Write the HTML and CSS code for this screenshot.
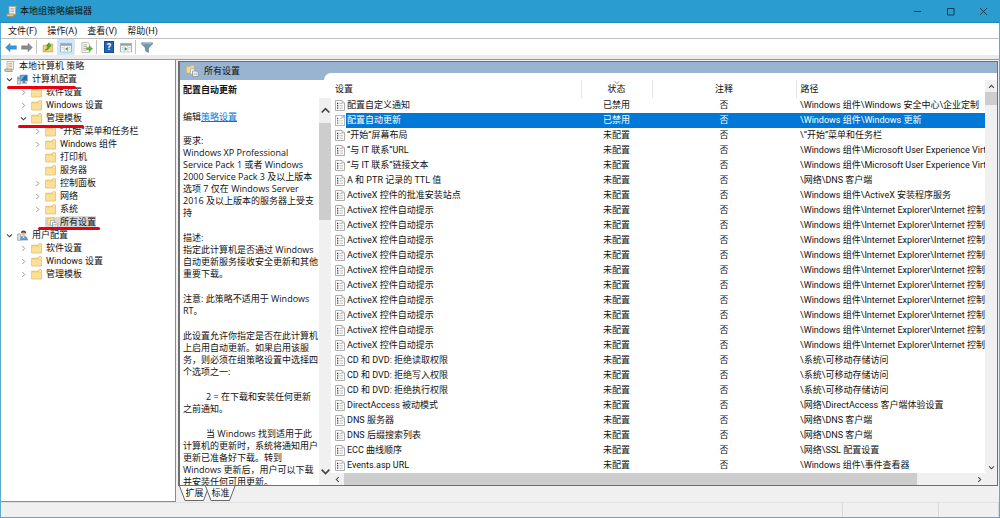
FILE: index.html
```html
<!DOCTYPE html>
<html lang="zh-CN">
<head>
<meta charset="utf-8">
<title>本地组策略编辑器</title>
<link rel="stylesheet" href="styles.css">
</head>
<body>
<svg class="defs" aria-hidden="true">
  <symbol id="scroll" viewBox="0 0 11 11"><path d="M3 .5h7.500q-1 .5-1 1.500V8.500H3z" fill="#f4ecd9" stroke="#b3a48b" stroke-width=".7"/><path d="M.5 9Q.5 8 1.500 8H8q-.6 1.500.4 2.500H2Q.5 10.500.5 9z" fill="#d9c9ab" stroke="#97866b" stroke-width=".7"/><path d="M4.500 2.500h3.500M4.500 4h3.500M4.500 5.500h3.500" stroke="#a4a4b4" stroke-width=".7"/></symbol>
  <symbol id="folder" viewBox="0 0 11 11"><path d="M.7 2.200h6.300l.8-1.400h2.600v9.200H.7z" fill="#f2cf75" stroke="#dcb558" stroke-width=".7"/><path d="M1 3.500h9v6H1z" fill="#fbe09a"/><path d="M8 1.500h2v1.300H8z" fill="#fff5cf"/></symbol>
  <symbol id="computer" viewBox="0 0 11 11"><path d="M3 1h7.500v6H3z" fill="#1d6fc0" stroke="#9aaabb" stroke-width=".8"/><path d="M3.500 1.500h4L4.500 6h-1z" fill="#64b3ec"/><path d="M6 7h2v1.500H6zM4.500 9h5.500" fill="#7c8792" stroke="#7c8792"/><path d="M.4 3h3v7h-3z" fill="#d5dde5" stroke="#758697" stroke-width=".7"/><path d="M1 4.500h1.700M1 6h1.700" stroke="#50657b" stroke-width=".7"/></symbol>
  <symbol id="user" viewBox="0 0 11 11"><path d="M3 10q-.2-4 3.500-4t4 4z" fill="#6aa4d2" stroke="#3f79ab" stroke-width=".6"/><circle cx="6.500" cy="3.500" r="2.200" fill="#e4ba91"/><path d="M4 3Q4 .6 6.700.6T9 3.500Q7.500 2 4 3z" fill="#66452c"/><path d="M.6 4h3v6.300h-3z" fill="#dce3e9" stroke="#7d8c99" stroke-width=".6"/><path d="M5.500 6.300l1 2 1-2z" fill="#fff"/></symbol>
  <symbol id="allset" viewBox="0 0 12 11"><path d="M.6 1.500h3.600l.7-1h2.500v6.800H.6z" fill="#f8dc91" stroke="#dfb75b" stroke-width=".7"/><path d="M4 3.500h4v5H4z" fill="#fff" stroke="#98a0a8" stroke-width=".7"/><path d="M6 5.500h3.700l1.500 1.500v3.500H6z" fill="#fff" stroke="#808890" stroke-width=".7"/><path d="M7 7.500h1M8.700 7.500h1.300M7 9h1M8.700 9h1.300" stroke="#6b7d90" stroke-width=".7"/></symbol>
  <symbol id="policy" viewBox="0 0 10 11"><path d="M.5.5h6.500l2.500 2.500v7.500h-9z" fill="#fff" stroke="#999" stroke-width=".8"/><path d="M7 .5V3h2.500" fill="#ddd" stroke="#999" stroke-width=".6"/><path d="M2 3.500h1.300M2 5.800h1.300M2 8.200h1.300" stroke="#333" stroke-width="1.300"/><path d="M4.500 3.500h2.500M4.500 5.800h3.500M4.500 8.200h3.500" stroke="#aaa" stroke-width=".8"/></symbol>
  <symbol id="right" viewBox="0 0 7 7"><path d="M2.300 1l2.500 2.500-2.500 2.500" fill="none" stroke="#9a9a9a"/></symbol>
  <symbol id="down" viewBox="0 0 7 7"><path d="M1 2.300l2.500 2.500L6 2.300" fill="none" stroke="#404040" stroke-width="1.100"/></symbol>
  <symbol id="arrow" viewBox="0 0 13 11"><path d="M.6 5.500L5.500.8v2.700h6.900v4H5.500v2.700z" fill="currentColor" stroke="#00000055" stroke-width=".6"/></symbol>
  <symbol id="upfolder" viewBox="0 0 12 12"><path d="M.7 3.500h4l1-1.200h5.500v8.500H.7z" fill="#f3cf72" stroke="#c39b43" stroke-width=".7"/><path d="M2.500 9Q5.500 8 6 4.500H4.300L7 .8l2.500 3.700H8Q7.500 8.500 2.500 9z" fill="#52ac38" stroke="#2f7f21" stroke-width=".5"/></symbol>
  <symbol id="console" viewBox="0 0 13 11"><path d="M.5 1h12v9.500H.5z" fill="#fff" stroke="#8b97a2" stroke-width=".8"/><path d="M1 1.500h11v2H1z" fill="#92a1ae"/><path d="M4.500 4v6M8.500 4v6" stroke="#a5b0ba" stroke-width=".7"/><path d="M1.700 5.500h1.800M1.700 7.200h1.800M9.500 5.500h2M9.500 7.200h2" stroke="#9cabba" stroke-width=".7"/></symbol>
  <symbol id="export" viewBox="0 0 13 12"><path d="M1 .5h6.500l2 2v9H1z" fill="#fffbe7" stroke="#9e9e8b" stroke-width=".7"/><path d="M2.500 3h4M2.500 5h4M2.500 7h3M2.500 9h3" stroke="#888" stroke-width=".7"/><path d="M6 6.200h3V4.300l3.600 3-3.600 3V8.500H6z" fill="#61b746" stroke="#368b27" stroke-width=".5"/></symbol>
  <symbol id="funnel" viewBox="0 0 12 11"><path d="M.6.8h10.800v1.300L7.500 6v4.500l-3-1.600V6L.6 2.100z" fill="#7795ad" stroke="#56758e" stroke-width=".6"/><path d="M1.500 1.200h9" stroke="#c4d7e5" stroke-width=".8"/></symbol>
  <symbol id="cup" viewBox="0 0 10 10"><path d="M1.500 6.800L5 3.300l3.500 3.500" fill="none" stroke="currentColor" stroke-width="1.500"/></symbol>
  <symbol id="cdown" viewBox="0 0 10 10"><path d="M1.500 3.300L5 6.800l3.500-3.500" fill="none" stroke="currentColor" stroke-width="1.500"/></symbol>
</svg>
<div class="window">
  <header class="titlebar">
    <svg class="ic"><use href="#scroll"/></svg>
    <h1>本地组策略编辑器</h1>
    <div class="winbtns">
      <button aria-label="最小化"><svg viewBox="0 0 9 9"><path d="M1 4.500h7"/></svg></button>
      <button aria-label="最大化"><svg viewBox="0 0 9 9"><path d="M1.500 1.500h6.500v6.500H1.500z"/></svg></button>
      <button aria-label="关闭"><svg viewBox="0 0 9 9"><path d="M1 1l7 7M8 1L1 8"/></svg></button>
    </div>
  </header>
  <nav class="menubar"><button>文件(F)</button><button>操作(A)</button><button>查看(V)</button><button>帮助(H)</button></nav>
  <div class="toolbar">
    <button aria-label="后退" class="back"><svg><use href="#arrow"/></svg></button>
    <button aria-label="前进" class="fwd"><svg><use href="#arrow"/></svg></button>
    <i class="sep"></i>
    <button aria-label="上一级"><svg><use href="#upfolder"/></svg></button>
    <button aria-label="显示树" class="on"><svg viewBox="0 0 13 11"><use href="#console"/><path d="M8.200 5v4L5.500 7z" fill="#3c9a34"/></svg></button>
    <i class="sep pale"></i>
    <button aria-label="导出列表"><svg><use href="#export"/></svg></button>
    <i class="sep"></i>
    <button aria-label="帮助" class="help">?</button>
    <button aria-label="操作窗格"><svg viewBox="0 0 13 11"><use href="#console"/><path d="M5.200 5v4L8 7z" fill="#3c9a34"/></svg></button>
    <i class="sep"></i>
    <button aria-label="筛选"><svg><use href="#funnel"/></svg></button>
  </div>
  <main class="main">
    <aside class="tree">
      <ul>
        <li class="root"><svg class="ic"><use href="#scroll"/></svg><span>本地计算机 策略</span></li>
        <li class="l1 mark m1"><svg class="ch"><use href="#down"/></svg><svg class="ic"><use href="#computer"/></svg><span>计算机配置</span></li>
        <li class="l2"><svg class="ch"><use href="#right"/></svg><svg class="ic"><use href="#folder"/></svg><span>软件设置</span></li>
        <li class="l2"><svg class="ch"><use href="#right"/></svg><svg class="ic"><use href="#folder"/></svg><span>Windows 设置</span></li>
        <li class="l2 mark m2"><svg class="ch"><use href="#down"/></svg><svg class="ic"><use href="#folder"/></svg><span>管理模板</span></li>
        <li class="l3"><svg class="ch"><use href="#right"/></svg><svg class="ic"><use href="#folder"/></svg><span>“开始”菜单和任务栏</span></li>
        <li class="l3"><svg class="ch"><use href="#right"/></svg><svg class="ic"><use href="#folder"/></svg><span>Windows 组件</span></li>
        <li class="l3"><i class="ch"></i><svg class="ic"><use href="#folder"/></svg><span>打印机</span></li>
        <li class="l3"><i class="ch"></i><svg class="ic"><use href="#folder"/></svg><span>服务器</span></li>
        <li class="l3"><svg class="ch"><use href="#right"/></svg><svg class="ic"><use href="#folder"/></svg><span>控制面板</span></li>
        <li class="l3"><svg class="ch"><use href="#right"/></svg><svg class="ic"><use href="#folder"/></svg><span>网络</span></li>
        <li class="l3"><svg class="ch"><use href="#right"/></svg><svg class="ic"><use href="#folder"/></svg><span>系统</span></li>
        <li class="l3 mark m3 cur"><i class="ch"></i><svg class="ic"><use href="#allset"/></svg><span>所有设置</span></li>
        <li class="l1"><svg class="ch"><use href="#down"/></svg><svg class="ic"><use href="#user"/></svg><span>用户配置</span></li>
        <li class="l2"><svg class="ch"><use href="#right"/></svg><svg class="ic"><use href="#folder"/></svg><span>软件设置</span></li>
        <li class="l2"><svg class="ch"><use href="#right"/></svg><svg class="ic"><use href="#folder"/></svg><span>Windows 设置</span></li>
        <li class="l2"><svg class="ch"><use href="#right"/></svg><svg class="ic"><use href="#folder"/></svg><span>管理模板</span></li>
      </ul>
    </aside>
    <section class="right">
      <div class="panel">
        <div class="band"><h2><svg><use href="#allset"/></svg>所有设置</h2><i class="lip"></i></div>
        <div class="content">
          <section class="detail">
            <h3>配置自动更新</h3>
            <div class="scroller">
              <div class="text">
                <p class="edit">编辑<a href="#policy-settings">策略设置</a></p>
                <p>要求:<br>Windows XP Professional<br>Service Pack 1 或者 Windows<br>2000 Service Pack 3 及以上版本<br>选项 7 仅在 Windows Server<br>2016 及以上版本的服务器上受支<br>持</p>
                <p>描述:<br>指定此计算机是否通过 Windows<br>自动更新服务接收安全更新和其他<br>重要下载。</p>
                <p>注意: 此策略不适用于 Windows<br>RT。</p>
                <p>此设置允许你指定是否在此计算机<br>上启用自动更新。如果启用该服<br>务，则必须在组策略设置中选择四<br>个选项之一:</p>
                <p class="ind">2 = 在下载和安装任何更新<br>之前通知。</p>
                <p class="ind">当 Windows 找到适用于此<br>计算机的更新时，系统将通知用户<br>更新已准备好下载。转到<br>Windows 更新后，用户可以下载<br>并安装任何可用更新。</p>
              </div>
              <div class="vbar wide">
                <button aria-label="向上"><svg><use href="#cup"/></svg></button>
                <div class="track"><i class="thumb"></i></div>
                <button aria-label="向下"><svg><use href="#cdown"/></svg></button>
              </div>
            </div>
          </section>
          <section class="list">
            <div class="rows">
              <div class="tablebox">
              <table>
                <colgroup><col class="c1"><col class="c2"><col class="c3"><col class="c4"></colgroup>
                <thead><tr><th>设置</th><th class="sorted">状态<svg viewBox="0 0 6 3"><path d="M.5.3L3 2.500 5.500.3" fill="none" stroke="#888" stroke-width=".8"/></svg></th><th>注释</th><th>路径</th></tr></thead>
                <tbody>
                <tr><td><div><svg><use href="#policy"/></svg><span>配置自定义通知</span></div></td><td>已禁用</td><td>否</td><td>\Windows 组件\Windows 安全中心\企业定制</td></tr>
                <tr class="sel"><td><div><svg><use href="#policy"/></svg><span>配置自动更新</span></div></td><td>已禁用</td><td>否</td><td>\Windows 组件\Windows 更新</td></tr>
                <tr><td><div><svg><use href="#policy"/></svg><span>“开始”屏幕布局</span></div></td><td>未配置</td><td>否</td><td>\“开始”菜单和任务栏</td></tr>
                <tr><td><div><svg><use href="#policy"/></svg><span>“与 IT 联系”URL</span></div></td><td>未配置</td><td>否</td><td>\Windows 组件\Microsoft User Experience Virtualization</td></tr>
                <tr><td><div><svg><use href="#policy"/></svg><span>“与 IT 联系”链接文本</span></div></td><td>未配置</td><td>否</td><td>\Windows 组件\Microsoft User Experience Virtualization</td></tr>
                <tr><td><div><svg><use href="#policy"/></svg><span>A 和 PTR 记录的 TTL 值</span></div></td><td>未配置</td><td>否</td><td>\网络\DNS 客户端</td></tr>
                <tr><td><div><svg><use href="#policy"/></svg><span>ActiveX 控件的批准安装站点</span></div></td><td>未配置</td><td>否</td><td>\Windows 组件\ActiveX 安装程序服务</td></tr>
                <tr><td><div><svg><use href="#policy"/></svg><span>ActiveX 控件自动提示</span></div></td><td>未配置</td><td>否</td><td>\Windows 组件\Internet Explorer\Internet 控制面板</td></tr>
                <tr><td><div><svg><use href="#policy"/></svg><span>ActiveX 控件自动提示</span></div></td><td>未配置</td><td>否</td><td>\Windows 组件\Internet Explorer\Internet 控制面板</td></tr>
                <tr><td><div><svg><use href="#policy"/></svg><span>ActiveX 控件自动提示</span></div></td><td>未配置</td><td>否</td><td>\Windows 组件\Internet Explorer\Internet 控制面板</td></tr>
                <tr><td><div><svg><use href="#policy"/></svg><span>ActiveX 控件自动提示</span></div></td><td>未配置</td><td>否</td><td>\Windows 组件\Internet Explorer\Internet 控制面板</td></tr>
                <tr><td><div><svg><use href="#policy"/></svg><span>ActiveX 控件自动提示</span></div></td><td>未配置</td><td>否</td><td>\Windows 组件\Internet Explorer\Internet 控制面板</td></tr>
                <tr><td><div><svg><use href="#policy"/></svg><span>ActiveX 控件自动提示</span></div></td><td>未配置</td><td>否</td><td>\Windows 组件\Internet Explorer\Internet 控制面板</td></tr>
                <tr><td><div><svg><use href="#policy"/></svg><span>ActiveX 控件自动提示</span></div></td><td>未配置</td><td>否</td><td>\Windows 组件\Internet Explorer\Internet 控制面板</td></tr>
                <tr><td><div><svg><use href="#policy"/></svg><span>ActiveX 控件自动提示</span></div></td><td>未配置</td><td>否</td><td>\Windows 组件\Internet Explorer\Internet 控制面板</td></tr>
                <tr><td><div><svg><use href="#policy"/></svg><span>ActiveX 控件自动提示</span></div></td><td>未配置</td><td>否</td><td>\Windows 组件\Internet Explorer\Internet 控制面板</td></tr>
                <tr><td><div><svg><use href="#policy"/></svg><span>ActiveX 控件自动提示</span></div></td><td>未配置</td><td>否</td><td>\Windows 组件\Internet Explorer\Internet 控制面板</td></tr>
                <tr><td><div><svg><use href="#policy"/></svg><span>CD 和 DVD: 拒绝读取权限</span></div></td><td>未配置</td><td>否</td><td>\系统\可移动存储访问</td></tr>
                <tr><td><div><svg><use href="#policy"/></svg><span>CD 和 DVD: 拒绝写入权限</span></div></td><td>未配置</td><td>否</td><td>\系统\可移动存储访问</td></tr>
                <tr><td><div><svg><use href="#policy"/></svg><span>CD 和 DVD: 拒绝执行权限</span></div></td><td>未配置</td><td>否</td><td>\系统\可移动存储访问</td></tr>
                <tr><td><div><svg><use href="#policy"/></svg><span>DirectAccess 被动模式</span></div></td><td>未配置</td><td>否</td><td>\网络\DirectAccess 客户端体验设置</td></tr>
                <tr><td><div><svg><use href="#policy"/></svg><span>DNS 服务器</span></div></td><td>未配置</td><td>否</td><td>\网络\DNS 客户端</td></tr>
                <tr><td><div><svg><use href="#policy"/></svg><span>DNS 后缀搜索列表</span></div></td><td>未配置</td><td>否</td><td>\网络\DNS 客户端</td></tr>
                <tr><td><div><svg><use href="#policy"/></svg><span>ECC 曲线顺序</span></div></td><td>未配置</td><td>否</td><td>\网络\SSL 配置设置</td></tr>
                <tr><td><div><svg><use href="#policy"/></svg><span>Events.asp URL</span></div></td><td>未配置</td><td>否</td><td>\Windows 组件\事件查看器</td></tr>
                </tbody>
              </table>
              </div>
              <div class="vbar">
                <button aria-label="向上"><svg><use href="#cup"/></svg></button>
                <div class="track"><i class="thumb"></i></div>
                <button aria-label="向下"><svg><use href="#cdown"/></svg></button>
              </div>
            </div>
            <div class="hbar">
              <button aria-label="向左"><svg class="left"><use href="#cup"/></svg></button>
              <div class="track"><i class="thumb"></i></div>
              <button aria-label="向右"><svg class="rightward"><use href="#cup"/></svg></button>
              <i class="corner"></i>
            </div>
          </section>
        </div>
      </div>
      <div class="tabs">
        <button><svg viewBox="0 0 31 15"><path d="M.5 0L6 14.500H24.500L30 0" fill="#fff" stroke="#666"/></svg><span>扩展</span></button>
        <button><svg viewBox="0 0 31 15"><path d="M.5 0L6 14.500H24.500L30 0" fill="#fafafa" stroke="#666"/></svg><span>标准</span></button>
      </div>
    </section>
  </main>
  <footer class="status"><span class="s1"></span><span class="s2"></span><span class="s3"></span></footer>
</div>
</body>
</html>
```
FILE: styles.css
```css
* { box-sizing: border-box; margin: 0; padding: 0; }
.defs { position: absolute; width: 0; height: 0; }
body {
  font: 9px/12px "Roboto", "Noto Sans CJK SC", sans-serif;
  color: #111;
}
button { font: inherit; color: inherit; border: 0; background: none; }
svg { display: block; flex: none; }
h1, h2, h3, th { font-size: 9px; font-weight: 400; }

.window {
  display: flex; flex-direction: column; height: 100vh; min-height: 518px;
  background: #f0f0f0;
  border: solid #5fa9cf; border-width: 0 1px 1px;
}
.titlebar {
  display: flex; align-items: center; flex: none; height: 23px; padding-left: 6px;
  margin: 0 -1px; background: #2a9ccf; border-bottom: 1px solid #1d8bbd;
}
.titlebar .ic { width: 11px; height: 11px; margin-right: 3px; }
.winbtns { display: flex; margin-left: auto; }
.winbtns button { width: 33px; height: 22px; display: grid; place-items: center; }
.winbtns svg { width: 9px; height: 9px; fill: none; stroke: #123c50; }

.menubar {
  display: flex; gap: 10px; flex: none; height: 16px; padding-left: 7px;
  background: #fff; border-bottom: 1px solid #c0c0c0;
}
.toolbar {
  display: flex; align-items: center; flex: none; height: 21px; padding: 0 2px 4px 2px;
  background: linear-gradient(#fff 16px, #ebebeb 16px); border-bottom: 1px solid #999;
}
.toolbar button { width: 16px; height: 16px; display: grid; place-items: center; }
.toolbar svg { width: 12px; height: 11px; }
.toolbar .back { color: #2e9be0; }
.toolbar .fwd { color: #8b8b8b; }
.toolbar .fwd svg { transform: scaleX(-1); }
.toolbar .on { background: #cce8ff; width: 17px; margin-left: 1px; }
.toolbar .help {
  width: 10px; height: 12px; margin: 0 4px; background: #2463b5; border: 1px solid #184a8e;
  color: #fff; font-weight: 700; line-height: 10px;
}
.sep { width: 1px; height: 14px; margin: 0 3px 0 1px; background: #c4c4c4; }
.sep.pale { background: #e4e4e4; margin: 0 4px 0 0; }

.main { display: flex; flex: 1; min-height: 0; }
.tree {
  flex: none; width: 175px; background: #fff; overflow: hidden;
  border: solid #8c8c8c; border-width: 0 1px 1px 0;
}
.tree ul { list-style: none; }
.tree li { position: relative; display: flex; align-items: center; height: 13px; white-space: nowrap; line-height: 13px; }
.tree .ch { width: 7px; height: 7px; margin: 0 4px; }
.tree .ic { width: 11px; height: 11px; margin-right: 4px; }
.root { padding-left: 3px; }
.l1 { padding-left: 1px; }
.l2 { padding-left: 15px; }
.l3 { padding-left: 29px; }
.cur span, .cur .ic { background: #d9d9d9; }
.tree .cur .ic { margin-right: 0; width: 15px; }
/* pen strokes drawn under three of the tree items */
.mark::after {
  content: ""; position: absolute; z-index: 1; top: 13px; height: 3px;
  border-radius: 2px; background: #e60012;
}
.m1::after { left: 6px; width: 69px; }
.m2::after { left: 17px; width: 66px; }
.m3::after { left: 37px; width: 62px; top: 11px; }

.right { display: flex; flex-direction: column; flex: 1; min-width: 0; padding: 1px 1px 0 2px; }
.panel {
  display: flex; flex-direction: column; flex: 1; min-height: 0; background: #fff;
  border: solid #6e6e6e; border-width: 1px 1px 1px 2px;
}
.band { display: flex; flex: none; height: 18px; background: #99b4d1; }
.band h2 { display: flex; align-items: center; width: 144px; padding-left: 6px; }
.band svg { width: 13px; height: 12px; margin-right: 5px; }
.lip { flex: 1; align-self: flex-end; height: 7px; background: #fff; border-top-left-radius: 7px; }
.content { display: flex; flex: 1; min-height: 0; }

.detail { display: flex; flex-direction: column; flex: none; width: 151px; min-height: 0; }
.detail h3 { height: 18px; padding: 4px 0 0 3px; font-weight: 700; line-height: 13px; }
.scroller { display: flex; flex: 1; min-height: 0; }
.text { flex: 1; min-width: 0; overflow: hidden; padding: 13px 0 0 3px; white-space: nowrap; font-family: "Open Sans", "Noto Sans CJK SC", sans-serif; }
.text p { margin-bottom: 13px; }
.text .edit { margin-bottom: 12px; }
.text .ind { text-indent: 23px; }
.text a { color: #0078d7; }

.vbar { display: flex; flex-direction: column; flex: none; width: 12px; background: #f0f0f0; }
.vbar button, .hbar button { display: grid; place-items: center; width: 12px; height: 12px; color: #444; }
.vbar svg, .hbar svg { width: 7px; height: 7px; }
.vbar .track { flex: 1; }
.thumb { display: block; background: #cdcdcd; }
.vbar .thumb { height: 13px; }
.vbar.wide button { height: 25px; }
.vbar.wide button:last-child { height: 28px; }
.vbar.wide svg { width: 11px; height: 11px; }
.vbar.wide .thumb { height: 97px; }

.list { display: flex; flex-direction: column; flex: 1; min-width: 0; }
.rows { display: flex; flex: 1; min-height: 0; }
.tablebox { flex: 1; min-width: 0; overflow: hidden; }
table { width: 100%; table-layout: fixed; border-collapse: collapse; }
.c1 { width: 250px; }
.c2 { width: 71px; }
.c3 { width: 144px; }
th { position: relative; height: 18px; border-right: 1px solid #e5e5e5; }
th:last-child { border-right: 0; }
th:first-child { text-align: left; padding-left: 4px; }
th:last-child { text-align: left; padding-left: 4px; }
.sorted svg { position: absolute; top: 1px; left: 50%; width: 6px; height: 3px; margin-left: -3px; }
td { height: 15px; line-height: 15px; text-align: center; white-space: nowrap; overflow: hidden; }
td:last-child { text-align: left; padding-left: 4px; }
td div { display: flex; align-items: center; padding-left: 4px; text-align: left; }
td svg { width: 10px; height: 11px; margin-right: 1px; }
td span { flex: 1; padding-left: 1px; }
.sel td { background: #0078d7; color: #fff; }
.sel td:first-child { background: #fff; }
.sel svg { background: #5aa5e8; opacity: .75; }
.sel span { background: #0078d7; }

.hbar { display: flex; flex: none; height: 12px; background: #f0f0f0; }
.hbar .track { flex: 1; }
.hbar .thumb { width: 91%; height: 12px; margin-left: 1px; }
.hbar .left { transform: rotate(-90deg); }
.hbar .rightward { transform: rotate(90deg); }
.corner { width: 12px; }

.tabs { display: flex; flex: none; height: 16px; padding-left: 1px; }
.tabs button { position: relative; width: 31px; height: 15px; margin-right: -5px; text-align: center; line-height: 15px; }
.tabs svg { position: absolute; inset: 0; width: 31px; height: 15px; }
.tabs span { position: relative; }

.status { display: flex; justify-content: flex-end; flex: none; height: 15px; border-top: 1px solid #e0e0e0; }
.status span { border-left: 1px solid #dadada; }
.s1 { width: 96px; }
.s2 { width: 60px; }
.s3 { width: 1px; }
```
